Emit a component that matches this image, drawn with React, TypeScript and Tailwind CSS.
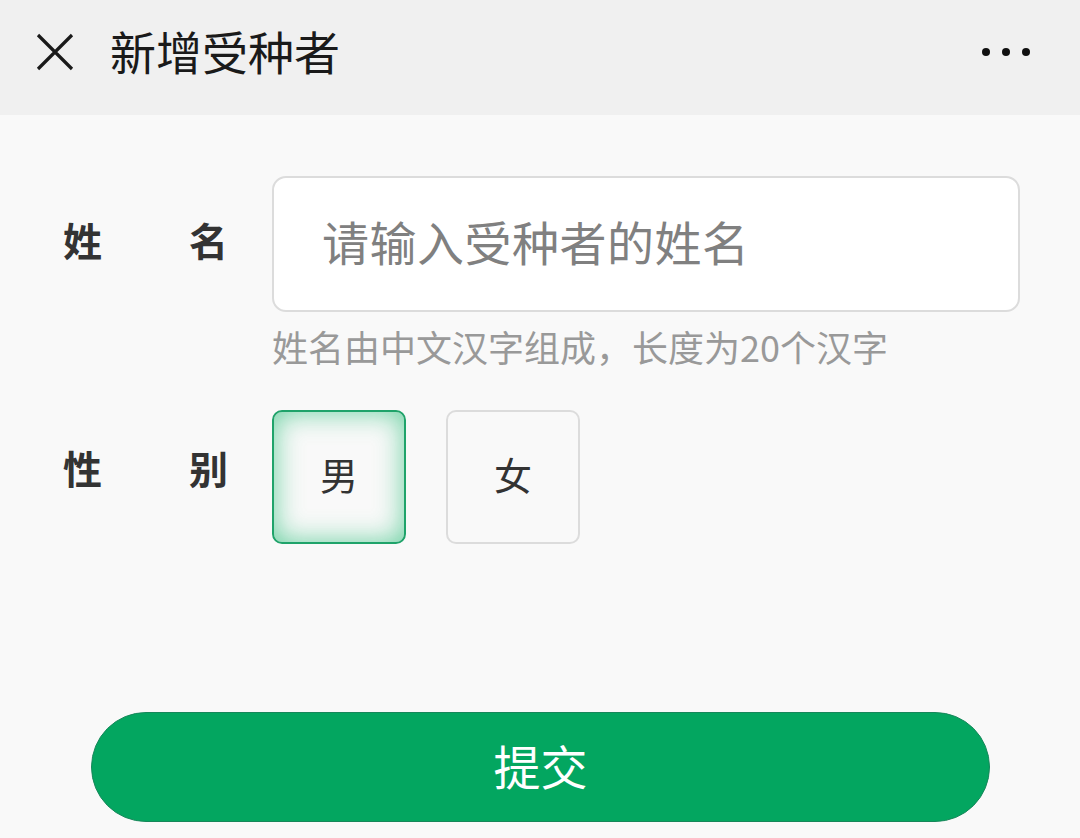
import { useState } from "react";

const font = { fontFamily: '"Noto Sans CJK SC", "Noto Sans", sans-serif' };

export default function App() {
  const [gender, setGender] = useState<"male" | "female">("male");
  const [name, setName] = useState("");

  return (
    <div className="w-[1080px] h-[838px] overflow-hidden bg-[#f9f9f9]" style={font}>
      {/* Top bar */}
      <div className="h-[115px] bg-[#f0f0f0] flex items-center pl-[35px] pr-[50px] pb-[12px]">
        <svg width="40" height="40" viewBox="0 0 40 40" className="shrink-0">
          <path d="M3 3 L37 37 M37 3 L3 37" stroke="#1a1a1a" strokeWidth="3.2" fill="none" />
        </svg>
        <span className="ml-[35px] text-[46px] leading-none text-[#1a1a1a] -mt-[4px]">新增受种者</span>
        <div className="ml-auto flex gap-[12px] items-center">
          <span className="w-[8px] h-[8px] rounded-full bg-[#111]" />
          <span className="w-[8px] h-[8px] rounded-full bg-[#111]" />
          <span className="w-[8px] h-[8px] rounded-full bg-[#111]" />
        </div>
      </div>

      {/* Form */}
      <div className="pt-[61px]">
        <div className="flex items-center">
          <div className="ml-[63px] w-[165px] flex justify-between text-[39px] font-bold text-[#333] -mt-[10px]">
            <span>姓</span>
            <span>名</span>
          </div>
          <input
            value={name}
            onChange={(e) => setName(e.target.value)}
            placeholder="请输入受种者的姓名"
            className="ml-[44px] w-[748px] h-[136px] rounded-[14px] border-2 border-[#dcdcdc] bg-white pl-[48px] pb-[8px] text-[47px] tracking-[0.5px] text-[#333] placeholder:text-[#808080] outline-none"
          />
        </div>
        <p className="ml-[272px] mt-[12px] text-[36px] leading-[44px] text-[#999]">
          姓名由中文汉字组成，长度为20个汉字
        </p>

        <div className="flex items-center mt-[42px]">
          <div className="ml-[63px] w-[165px] flex justify-between text-[39px] font-bold text-[#333] -mt-[20px]">
            <span>性</span>
            <span>别</span>
          </div>
          <div className="ml-[44px] flex gap-[40px]">
            <button
              onClick={() => setGender("male")}
              className={`w-[134px] h-[134px] rounded-[10px] border-2 text-[38px] text-[#333] flex items-center justify-center pb-[8px] ${
                gender === "male"
                  ? "border-[#1fa36a] shadow-[inset_0_0_28px_rgba(40,190,120,0.7)]"
                  : "border-[#dcdcdc]"
              }`}
            >
              男
            </button>
            <button
              onClick={() => setGender("female")}
              className={`w-[134px] h-[134px] rounded-[10px] border-2 text-[38px] text-[#333] flex items-center justify-center pb-[8px] ${
                gender === "female"
                  ? "border-[#1fa36a] shadow-[inset_0_0_28px_rgba(40,190,120,0.7)]"
                  : "border-[#dcdcdc]"
              }`}
            >
              女
            </button>
          </div>
        </div>

        <button className="mt-[168px] ml-[91px] w-[899px] h-[110px] rounded-full bg-[#03a660] border border-[#16875a] text-white text-[47px] flex items-center justify-center pb-[4px]">
          提交
        </button>
      </div>
    </div>
  );
}
